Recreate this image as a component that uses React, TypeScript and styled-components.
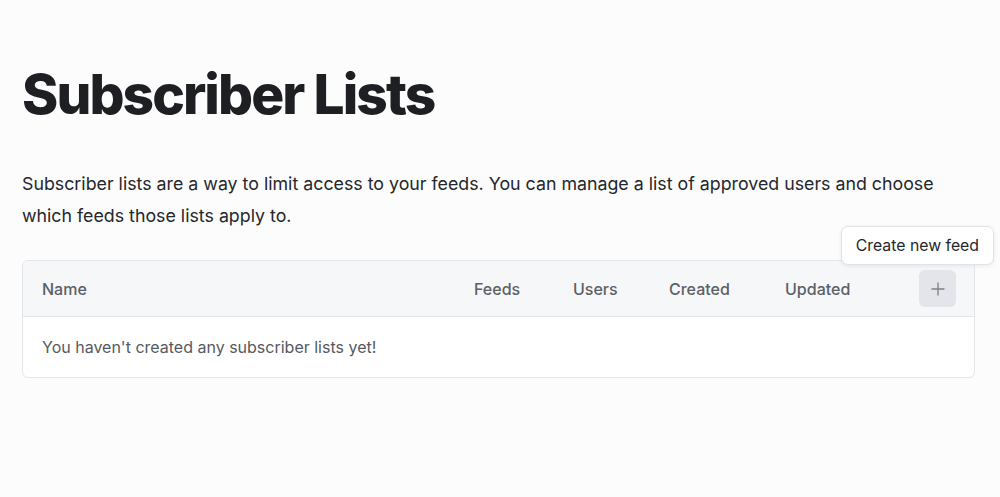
import styled, { createGlobalStyle } from "styled-components";

const GlobalStyle = createGlobalStyle`
  body {
    margin: 0;
    background: #fcfcfc;
    font-family: Inter, "Noto Sans", sans-serif;
    color: #1f2328;
  }
`;

const Page = styled.main`
  padding: 58px 25px 40px 22px;
`;

const Title = styled.h1`
  margin: 0;
  font-size: 55px;
  line-height: 72px;
  font-weight: 800;
  letter-spacing: -0.035em;
  color: #1d1f23;
`;

const Lead = styled.p`
  margin: 38px 0 0;
  font-size: 17.8px;
  line-height: 32px;
  color: #24272c;
  max-width: 940px;
`;

const Table = styled.div`
  margin-top: 28px;
  border: 1px solid #e4e5e8;
  border-radius: 6px;
  background: #fff;
`;

const HeaderRow = styled.div`
  display: grid;
  grid-template-columns: 1fr 99px 96px 116px 134px 37px;
  align-items: center;
  height: 55px;
  padding: 0 18px 0 19px;
  background: #f6f7f9;
  border-bottom: 1px solid #e4e5e8;
  border-radius: 6px 6px 0 0;
`;

const HeadCell = styled.div`
  font-size: 16px;
  font-weight: 500;
  color: #5b6068;
`;

const AddWrap = styled.div`
  position: relative;
  width: 37px;
  height: 37px;
`;

const AddButton = styled.button`
  width: 37px;
  height: 37px;
  border: none;
  border-radius: 6px;
  background: #e4e5ea;
  color: #7b7f87;
  display: flex;
  align-items: center;
  justify-content: center;
  padding: 0;
  cursor: pointer;
`;

const Tooltip = styled.div`
  position: absolute;
  bottom: calc(100% + 5px);
  right: -38px;
  white-space: nowrap;
  padding: 0 14px;
  height: 37px;
  display: flex;
  align-items: center;
  background: #fff;
  border: 1px solid #e2e3e6;
  border-radius: 7px;
  box-shadow: 0 1px 4px rgba(0, 0, 0, 0.08);
  font-size: 15.8px;
  color: #24272c;
`;

const EmptyRow = styled.div`
  height: 60px;
  display: flex;
  align-items: center;
  padding: 0 19px;
  font-size: 16px;
  color: #555a61;
`;

const columns = ["Name", "Feeds", "Users", "Created", "Updated"];

export default function App() {
  return (
    <>
      <GlobalStyle />
      <Page>
        <Title>Subscriber Lists</Title>
        <Lead>
          Subscriber lists are a way to limit access to your feeds. You can
          manage a list of approved users and choose which feeds those lists
          apply to.
        </Lead>
        <Table>
          <HeaderRow>
            {columns.map((c) => (
              <HeadCell key={c}>{c}</HeadCell>
            ))}
            <AddWrap>
              <AddButton aria-label="Create new feed">
                <svg width="16" height="16" viewBox="0 0 16 16" fill="none">
                  <path
                    d="M8 2v12M2 8h12"
                    stroke="currentColor"
                    strokeWidth="1.3"
                    strokeLinecap="round"
                  />
                </svg>
              </AddButton>
              <Tooltip>Create new feed</Tooltip>
            </AddWrap>
          </HeaderRow>
          <EmptyRow>You haven't created any subscriber lists yet!</EmptyRow>
        </Table>
      </Page>
    </>
  );
}
